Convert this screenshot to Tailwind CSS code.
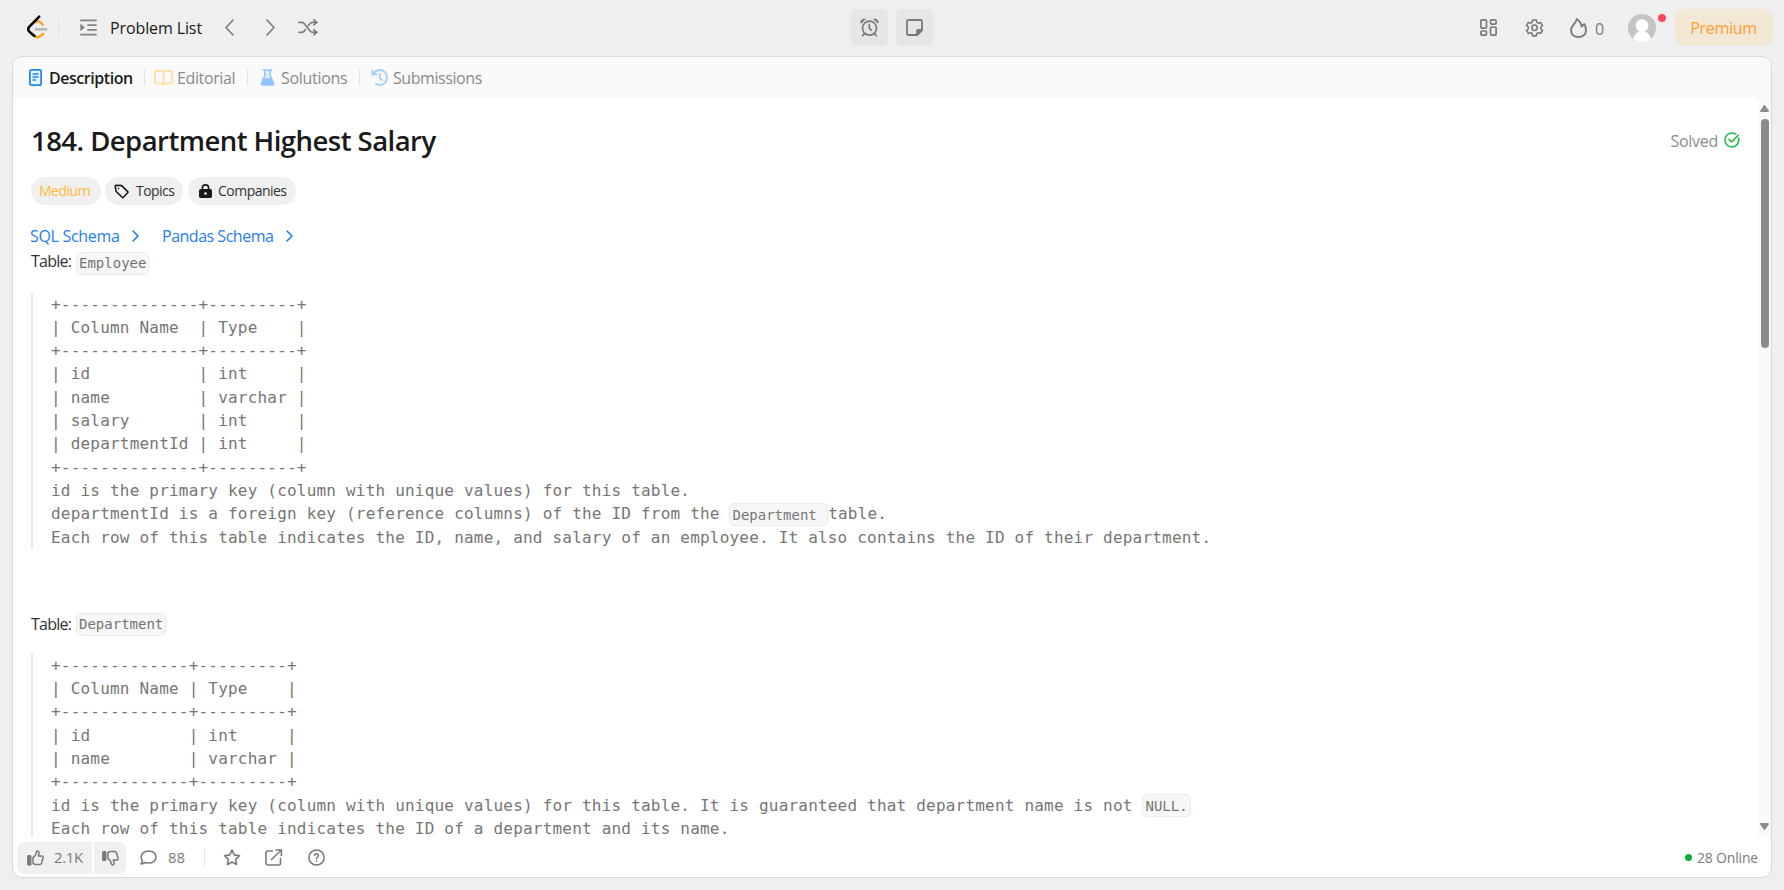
<!DOCTYPE html>
<html lang="en">
<head>
    <meta charset="UTF-8">
    <meta name="viewport" content="width=device-width, initial-scale=1.0">
    <title>Department Highest Salary</title>
    <script src="https://cdn.jsdelivr.net/npm/@tailwindcss/browser@4"></script>
</head>
<body class="h-screen overflow-hidden bg-[#efefef] flex flex-col font-['Open_Sans','Noto_Sans',sans-serif] text-base text-[#333333]">
    <header class="h-14 shrink-0 flex items-center justify-between pl-[27px] pr-[11px] pb-[1px] text-[#7a7a7a]">
        <div class="flex items-center w-[824px]">
            <!-- Logo -->
            <svg class="w-[22px] h-6 -mt-px" viewBox="0 0 22 24" fill="none" stroke-linecap="round" stroke-linejoin="round">
                <path d="M8.500 7.400 C10 5.800 11.600 5.800 13 7 L16 9.800" stroke="#ffa116" stroke-width="2.300"/>
                <path d="M7.400 20.600 C9.500 22.800 12 22.600 13.400 21.200 L16 18.800" stroke="#ffa116" stroke-width="2.500"/>
                <path d="M8.500 14.400 H19.300" stroke="#b3b3b3" stroke-width="2.200"/>
                <path d="M12.200 1.600 L2.400 11.700 C1 13.200 1 15.200 2.400 16.700 L7.400 21" stroke="#000" stroke-width="2.500"/>
            </svg>
            <div class="w-px h-[18px] bg-[#e0e0e0] ml-[9px]"></div>
            <svg class="w-[17px] h-[17px] ml-[21px]" viewBox="0 0 17 17" fill="none" stroke="#858585" stroke-width="1.900" stroke-linecap="round">
                <path d="M1 1.400H16M8 6.100H16M8 10.900H16M1 15.600H16"/>
                <path d="M.6 5.400V11.600L4.300 8.500Z" fill="#7d7d7d" stroke-width=".6" stroke-linejoin="round"/>
            </svg>
            <span class="w-[93px] ml-[13px] mt-px whitespace-nowrap font-medium tracking-[-0.11px] text-[#1a1a1a]">Problem List</span>
            <svg class="w-[9px] h-[17px] ml-[22px]" viewBox="0 0 9 17" fill="none" stroke="currentColor" stroke-width="1.600" stroke-linecap="round" stroke-linejoin="round"><path d="M8 1 L1 8.500 L8 16"/></svg>
            <svg class="w-[9px] h-[17px] ml-8" viewBox="0 0 9 17" fill="none" stroke="currentColor" stroke-width="1.600" stroke-linecap="round" stroke-linejoin="round"><path d="M1 1 L8 8.500 L1 16"/></svg>
            <svg class="w-5 h-[17px] ml-[23px]" viewBox="0 0 20 17" fill="none" stroke="currentColor" stroke-width="1.600" stroke-linecap="round" stroke-linejoin="round">
                <path d="M1 3.400H3.600C5 3.400 5.800 4 6.600 5L11.600 11.600C12.400 12.800 13.200 13.400 14.600 13.400H18.600"/>
                <path d="M1 13.400H3.600C5 13.400 5.800 12.800 6.600 11.700L7.400 10.600M10.400 6.600L11.600 5C12.400 4 13.200 3.400 14.600 3.400H18.600"/>
                <path d="M15.800 .8L18.800 3.400L15.800 6M15.800 10.800L18.800 13.400L15.800 16"/>
            </svg>
        </div>
        <div class="flex items-center gap-2 flex-1">
            <button class="w-[37px] h-[37px] rounded-md bg-[#e6e6e6] flex items-center justify-center">
                <svg class="w-[19px] h-[19px]" viewBox="0 0 19 19" fill="none" stroke="currentColor" stroke-width="1.700" stroke-linecap="round" stroke-linejoin="round">
                    <circle cx="9.500" cy="10.200" r="7"/>
                    <path d="M9.300 6.400V10.400L11.400 12.200M4.400 15.600L2.600 17.800M14.600 15.600L16.400 17.800"/>
                    <path d="M.7 4.300C.7 1.800 3 .6 5.400 1.200L1.300 4.900ZM18.300 4.300C18.300 1.800 16 .6 13.600 1.200L17.700 4.900Z" fill="currentColor" stroke-width=".8"/>
                </svg>
            </button>
            <button class="w-[37px] h-[37px] rounded-md bg-[#e6e6e6] flex items-center justify-center">
                <svg class="w-[17px] h-[17px]" viewBox="0 0 17 17" fill="none" stroke="currentColor" stroke-width="1.800" stroke-linejoin="round">
                    <path d="M2.600 1H14.400C15.400 1 16 1.600 16 2.600V11L11 16H2.600C1.600 16 1 15.400 1 14.400V2.600C1 1.600 1.600 1 2.600 1Z"/>
                    <path d="M16 11H12.200C11.400 11 11 11.400 11 12.200V16Z" fill="currentColor"/>
                </svg>
            </button>
        </div>
        <div class="flex items-center">
            <svg class="w-[17px] h-[17px]" viewBox="0 0 17 17" fill="none" stroke="currentColor" stroke-width="1.700">
                <rect x=".9" y=".9" width="5.600" height="8.200" rx="1"/><rect x="10.500" y=".9" width="5.600" height="4.200" rx="1"/>
                <rect x=".9" y="12" width="5.600" height="4.100" rx="1"/><rect x="10.500" y="8" width="5.600" height="8.100" rx="1"/>
            </svg>
            <svg class="w-[19px] h-[19px] ml-7" viewBox="0 0 24 24" fill="none" stroke="currentColor" stroke-width="2" stroke-linejoin="round">
                <path d="M9.700 2.500h4.600l.7 3 1.800 1 3-.9 2.300 4-2.300 2.100v2l2.300 2.100-2.300 3.700-3-.9-1.800 1-.7 3H9.700l-.7-3-1.800-1-3 .9-2.300-3.900 2.300-2v-2L1.900 9.600l2.300-4 3 .9 1.800-1z"/>
                <circle cx="12" cy="12.300" r="3.400"/>
            </svg>
            <svg class="w-[17px] h-5 ml-[26px]" viewBox="0 0 17 20" fill="none" stroke="currentColor" stroke-width="1.900" stroke-linejoin="round">
                <path d="M6.800 1C6.800 4.600 1 7.200 1 12.500C1 16.400 4.300 19 8.500 19C12.700 19 16 16.400 16 12.500C16 9.800 15.400 7.800 14.300 6L11.600 8.600C11.200 5.400 9.400 2.700 6.800 1Z"/>
            </svg>
            <span class="w-[10px] ml-2 mt-[3px]">0</span>
            <!-- Avatar -->
            <div class="relative ml-[23px] w-7 h-7">
                <svg class="w-7 h-7" viewBox="0 0 28 28">
                    <defs><clipPath id="av"><circle cx="14" cy="14" r="14"/></clipPath></defs>
                    <g clip-path="url(#av)">
                        <rect width="28" height="28" fill="#c4c4c4"/>
                        <circle cx="14" cy="11.600" r="6.400" fill="#fff"/>
                        <path d="M4.500 28C5 21 9 18.300 11 17.500H17C19 18.300 23 21 23.500 28Z" fill="#fff"/>
                    </g>
                </svg>
                <span class="absolute -right-[10px] top-0 w-2 h-2 rounded-full bg-[#ff4756]"></span>
            </div>
            <button class="ml-[19px] w-[98px] h-[37px] pr-px rounded-[9px] bg-[#f3e7d6] text-[#ffa033] font-medium tracking-[-0.3px]">Premium</button>
        </div>
    </header>

    <main class="mx-3 h-[822px] border border-[#d9d9d9] rounded-[10px] bg-white overflow-hidden flex flex-col">
        <nav class="h-[41px] shrink-0 bg-[#fafafa] flex items-center pl-4 text-[#8a8a8a]">
            <svg class="w-[13px] h-[17px]" viewBox="0 0 13 17" fill="none" stroke="#1a86f5" stroke-linecap="round">
                <rect x=".9" y=".9" width="11.200" height="15.200" rx="1.700" fill="#e9f4ff" stroke-width="1.700"/>
                <path d="M4 5H9M4 8H9M4 11H6.500" stroke-width="1.300"/>
            </svg>
            <span class="w-[85px] ml-[7px] whitespace-nowrap font-semibold tracking-[-0.46px] text-[#1a1a1a]">Description</span>
            <div class="w-px h-[15px] bg-[#e3e3e3] ml-[10px]"></div>
            <svg class="w-[19px] h-4 ml-[9px]" viewBox="0 0 19 16" fill="none" stroke="#fbe0a3" stroke-width="1.800" stroke-linejoin="round">
                <path d="M9.500 2.400C8.700 1.400 7.800 1 6.600 1H2C1.300 1 1 1.400 1 2V12.300C1 13 1.300 13.300 2 13.300H6.600C7.800 13.300 8.800 13.700 9.500 14.700C10.200 13.700 11.200 13.300 12.400 13.300H17C17.700 13.300 18 13 18 12.300V2C18 1.400 17.700 1 17 1H12.400C11.200 1 10.300 1.400 9.500 2.400ZM9.500 2.400V14.700"/>
            </svg>
            <span class="w-[59px] ml-1 whitespace-nowrap tracking-[-0.37px]">Editorial</span>
            <div class="w-px h-[15px] bg-[#e3e3e3] ml-[11px]"></div>
            <svg class="w-[15px] h-[17px] ml-3" viewBox="0 0 15 17" fill="none">
                <path d="M4.700 1V6.500L1.200 13.500C.6 15 1.200 16 2.600 16H12.400C13.800 16 14.400 15 13.800 13.500L10.300 6.500V1Z" fill="#dcecff"/>
                <path d="M3.600 9.300H11.400L14.200 14C14.800 15.600 14 16.800 12.600 16.800H2.400C1 16.800 .2 15.600 .8 14Z" fill="#92c5fc"/>
                <path d="M4.800 1V6.500L2.400 11.500M10.200 1V6.500L12.600 11.500M3.200 1H11.800" stroke="#92c5fc" stroke-width="1.500" stroke-linecap="round"/>
            </svg>
            <span class="w-[67px] ml-[6px] whitespace-nowrap tracking-[-0.3px]">Solutions</span>
            <div class="w-px h-[15px] bg-[#e3e3e3] ml-[11px]"></div>
            <svg class="w-[17px] h-[17px] ml-[11px]" viewBox="0 0 17 17" fill="none" stroke="#a3cdfb" stroke-width="1.800" stroke-linecap="round" stroke-linejoin="round">
                <path d="M2 5C3.400 2.600 5.800 1 8.800 1C13 1 16 4.300 16 8.500C16 12.700 13 16 8.800 16C7.300 16 6 15.600 4.900 14.800M1 1.600L1.600 5.500L5.500 5.200M8.700 5V9L11 11"/>
            </svg>
            <span class="ml-[5px] whitespace-nowrap tracking-[-0.43px]">Submissions</span>
        </nav>

        <section class="h-[739px] shrink-0 flex overflow-hidden">
            <div class="flex-1 min-w-0 pl-[18px] pr-[18px]">
                <div class="flex justify-between items-center h-[42px] mt-[22px]">
                    <h1 class="text-[27.5px] leading-none font-semibold tracking-[-0.54px] text-[#1a1a1a] whitespace-nowrap">184. Department Highest Salary</h1>
                    <div class="flex items-center text-[#8c8c8c]">
                        <span class="tracking-[-0.28px]">Solved</span>
                        <svg class="w-4 h-4 ml-[6px] -mt-[3px]" viewBox="0 0 16 16" fill="none" stroke="#2cbb4e" stroke-width="1.600" stroke-linecap="round" stroke-linejoin="round">
                            <path d="M14.600 6C15.600 10.800 12.400 15 8 15C4 15 1 12 1 8C1 4 4 1 8 1C9.500 1 10.800 1.400 11.900 2.100"/>
                            <path d="M5 7.400L7.600 9.900L14.200 3.300"/>
                        </svg>
                    </div>
                </div>
                <div class="flex gap-1 mt-[15px] text-sm whitespace-nowrap">
                    <span class="h-7 w-[70px] rounded-full bg-[#f0f0f0] flex items-center pl-[8px] text-[#ffb938] tracking-[-0.5px]">Medium</span>
                    <span class="h-7 w-[78px] rounded-full bg-[#f0f0f0] flex items-center pl-[9px] tracking-[-0.55px]">
                        <svg class="w-[15px] h-[15px]" viewBox="0 0 15 15" fill="none" stroke="#1a1a1a" stroke-width="1.600" stroke-linejoin="round"><path d="M1.200 2.200C1.200 1.500 1.500 1.200 2.200 1.200L7.700 1.600L13.700 7.600C14.100 8 14.100 8.400 13.700 8.800L9.300 13.300C8.900 13.700 8.500 13.700 8.100 13.300L2 7.200Z"/><circle cx="4.600" cy="4.600" r=".5" fill="#1a1a1a" stroke-width=".7"/></svg>
                        <span class="ml-[7px]">Topics</span>
                    </span>
                    <span class="h-7 w-[108px] ml-px rounded-full bg-[#f0f0f0] flex items-center pl-[11px] tracking-[-0.52px]">
                        <svg class="w-[13px] h-[14px]" viewBox="0 0 13 14" fill="none"><rect y="5" width="13" height="9" rx="1.800" fill="#1a1a1a"/><path d="M3.400 6V3.800C3.400 2 4.700 .9 6.500 .9C8.300 .9 9.600 2 9.600 3.800V6" stroke="#1a1a1a" stroke-width="1.700"/><circle cx="6.500" cy="9.500" r="1.300" fill="#f0f0f0"/></svg>
                        <span class="ml-[6px]">Companies</span>
                    </span>
                </div>
                <div class="flex items-center h-6 mt-[19px] text-[#1f80f0] whitespace-nowrap">
                    <span class="w-[90px] -ml-px tracking-[-0.32px]">SQL Schema</span>
                    <svg class="w-[7px] h-3 ml-[12px]" viewBox="0 0 7 12" fill="none" stroke="currentColor" stroke-width="1.600" stroke-linecap="round" stroke-linejoin="round"><path d="M1 1L6 6L1 11"/></svg>
                    <span class="w-[112px] ml-[23px] tracking-[-0.49px]">Pandas Schema</span>
                    <svg class="w-[7px] h-3 ml-3" viewBox="0 0 7 12" fill="none" stroke="currentColor" stroke-width="1.600" stroke-linecap="round" stroke-linejoin="round"><path d="M1 1L6 6L1 11"/></svg>
                </div>
                <p class="flex items-center h-[26px]">
                    <span class="w-[45px] tracking-[-0.75px]">Table:</span>
                    <code class="h-[23px] mt-[4px] px-[2px] border border-[#ebebeb] rounded-[5px] bg-[#f7f7f7] text-sm leading-[21px] text-[#737373] font-['DejaVu_Sans_Mono',monospace]">Employee</code>
                </p>
                <pre class="mt-[18.500px] pl-[18px] border-l-2 border-[#e8e8e8] text-[16px] leading-[23.333px] tracking-[0.2px] text-[#767676] font-['DejaVu_Sans_Mono',monospace]">+--------------+---------+
| Column Name  | Type    |
+--------------+---------+
| id           | int     |
| name         | varchar |
| salary       | int     |
| departmentId | int     |
+--------------+---------+
id is the primary key (column with unique values) for this table.
departmentId is a foreign key (reference columns) of the ID from the <code class="px-[2px] py-[2.500px] border border-[#ebebeb] rounded-[5px] bg-[#f7f7f7] text-sm leading-none tracking-normal font-['DejaVu_Sans_Mono',monospace]">Department </code>table.
Each row of this table indicates the ID, name, and salary of an employee. It also contains the ID of their department.</pre>
                <p class="flex items-center h-[26px] mt-[62px]">
                    <span class="w-[45px] tracking-[-0.75px]">Table:</span>
                    <code class="h-[23px] mt-px px-[2px] border border-[#ebebeb] rounded-[5px] bg-[#f7f7f7] text-sm leading-[21px] text-[#737373] font-['DejaVu_Sans_Mono',monospace]">Department</code>
                </p>
                <pre class="mt-[16.500px] pl-[18px] border-l-2 border-[#e8e8e8] text-[16px] leading-[23.333px] tracking-[0.2px] text-[#767676] font-['DejaVu_Sans_Mono',monospace]">+-------------+---------+
| Column Name | Type    |
+-------------+---------+
| id          | int     |
| name        | varchar |
+-------------+---------+
id is the primary key (column with unique values) for this table. It is guaranteed that department name is not <code class="px-[2px] py-[2.500px] border border-[#ebebeb] rounded-[5px] bg-[#f7f7f7] text-sm leading-none tracking-normal font-['DejaVu_Sans_Mono',monospace]">NULL.
</code>Each row of this table indicates the ID of a department and its name.</pre>
            </div>
            <!-- Scrollbar -->
            <div class="w-[13px] shrink-0 bg-[#fafafa] flex flex-col items-center pt-[7px] pb-[7px]">
                <svg class="w-[9px] h-[7px]" viewBox="0 0 9 7" fill="#8b8b8b"><path d="M3.700 .5Q4.500 -.4 5.300 .5L8.800 5.800Q9 7 8 7H1Q0 7 .2 5.800Z"/></svg>
                <div class="w-2 h-[229px] mt-[7px] rounded-full bg-[#8b8b8b]"></div>
                <svg class="w-[9px] h-[7px] mt-auto" viewBox="0 0 9 7" fill="#8b8b8b"><path d="M3.700 6.500Q4.500 7.400 5.300 6.500L8.800 1.200Q9 0 8 0H1Q0 0 .2 1.200Z"/></svg>
            </div>
        </section>

        <footer class="flex-1 flex items-center pl-1 pr-[13px] pt-px text-[15px] text-[#7a7a7a]">
            <div class="flex gap-[2px] h-8">
                <button class="w-[75px] rounded-l-lg bg-[#f0f0f0] flex items-center pl-[10px]">
                    <svg class="w-[17px] h-4" viewBox="0 0 17 16" fill="none" stroke="currentColor" stroke-width="1.500" stroke-linejoin="round"><rect x=".6" y="5.600" width="3.400" height="9.500" rx=".4" fill="currentColor" stroke-width="1"/><path d="M6 7.400C8.400 6.200 9.200 4.200 9.400 1.800C9.600 .6 11.800 .6 12 2.400C12.100 3.600 11.800 4.800 11.300 6H14.600C15.800 6 16.300 6.800 16 7.800L14.600 13C14.300 14 13.600 14.400 12.700 14.400H9C7.800 14.400 7 14 6 13.300Z"/></svg>
                    <span class="ml-[10px] font-medium tracking-[-0.4px]">2.1K</span>
                </button>
                <button class="w-8 rounded-r-lg bg-[#f0f0f0] flex items-center pl-2">
                    <svg class="w-[17px] h-4" viewBox="0 0 17 16" fill="none" stroke="currentColor" stroke-width="1.500" stroke-linejoin="round"><rect x=".6" y="1.600" width="3.400" height="9" rx=".4" fill="currentColor" stroke-width="1"/><path d="M6 8.600C8.400 9.800 9.200 11.800 9.400 14.200C9.600 15.400 11.800 15.400 12 13.600C12.100 12.400 11.800 11.200 11.300 10H14.600C15.800 10 16.300 9.200 16 8.200L14.600 3C14.300 2 13.600 1.600 12.700 1.600H9C7.800 1.600 7 2 6 2.700Z"/></svg>
                </button>
            </div>
            <svg class="w-[17px] h-[15px] ml-[14px]" viewBox="0 0 17 15" fill="none" stroke="currentColor" stroke-width="1.600" stroke-linejoin="round"><path d="M8.700 1C13 1 16 3.600 16 7C16 10.400 13 13 8.700 13C7.500 13 6.400 12.800 5.400 12.400C4.300 13.300 2.900 13.900 1 13.900C1.800 13 2.400 12 2.500 10.800C1.700 9.800 1.200 8.600 1.200 7C1.200 3.600 4.400 1 8.700 1Z"/></svg>
            <span class="w-[18px] ml-[11px] font-medium">88</span>
            <div class="w-px h-[19px] bg-[#e5e5e5] ml-[18px]"></div>
            <svg class="w-[18px] h-[17px] ml-[18px]" viewBox="0 0 18 17" fill="none" stroke="currentColor" stroke-width="1.600" stroke-linejoin="round"><path d="M9 1.200L11.300 5.900L16.500 6.700L12.700 10.300L13.600 15.500L9 13L4.400 15.500L5.300 10.300L1.500 6.700L6.700 5.900Z"/></svg>
            <svg class="w-[18px] h-[17px] ml-6" viewBox="0 0 18 17" fill="none" stroke="currentColor" stroke-width="1.600" stroke-linecap="round" stroke-linejoin="round"><path d="M7.500 2H3C1.700 2 1 2.700 1 4V14C1 15.300 1.700 16 3 16H13.500C14.800 16 15.500 15.300 15.500 14V9.500M6.500 10.500L16 1.200M11 1H16.400V6.400"/></svg>
            <svg class="w-[17px] h-[17px] ml-[25px]" viewBox="0 0 17 17" fill="none" stroke="currentColor" stroke-width="1.500" stroke-linecap="round" stroke-linejoin="round"><circle cx="8.500" cy="8.500" r="7.600"/><path d="M6.500 6.500C6.500 4.200 10.600 4.300 10.500 6.700C10.400 8.200 8.500 8.200 8.500 9.700"/><circle cx="8.500" cy="12.200" r=".4" fill="currentColor" stroke-width=".9"/></svg>
            <div class="ml-auto flex items-center text-sm">
                <span class="w-[7px] h-[7px] rounded-full bg-[#0cae35] mr-[5px]"></span>
                <span class="tracking-[-0.18px]">28 Online</span>
            </div>
        </footer>
    </main>
</body>
</html>
